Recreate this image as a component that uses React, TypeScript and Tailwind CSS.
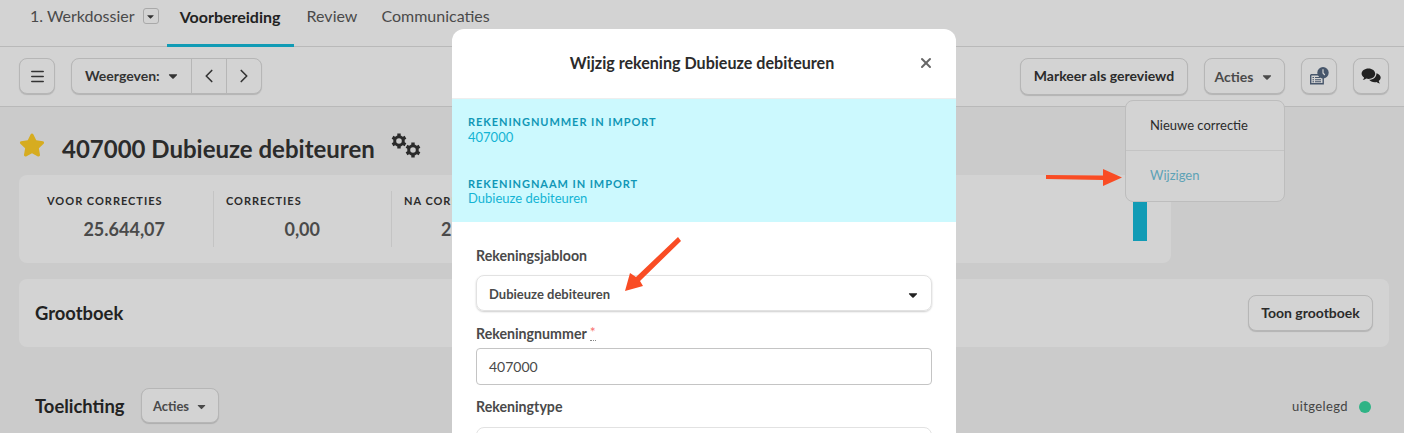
import { Menu, ChevronLeft, ChevronRight, X } from 'lucide-react';
import { FaStar, FaCaretDown } from 'react-icons/fa';

const btn = 'flex items-center justify-center rounded-lg border border-[#b6b6b6] bg-[#d3d3d3] shadow-[0_1px_1px_rgba(0,0,0,0.15)]';

function Stat({ label, value, width, pad, end }: { label: string; value: string; width: string; pad: string; end: string }) {
    return (
        <div className={`${width} ${pad} h-[56px] border-r border-[#c4c4c4]`}>
            <div className="text-[11px] font-bold tracking-[0.09em] leading-[20px] text-[#2b2b2b] whitespace-nowrap">{label}</div>
            <div className={`${end} mt-[6px] text-right text-lg font-bold leading-[24px] text-[#4a4a4a]`}>{value}</div>
        </div>
    );
}

function HistoryIcon() {
    return (
        <svg width="20" height="18" viewBox="0 0 20 18">
            <path d="M1.700 7.700h10M1.700 7.700v9h12.500V11" fill="none" stroke="#47566b" strokeWidth="1.400" />
            <path d="M3.500 10.500h1.500M6 10.500h5M3.500 12.700h1.500M6 12.700h6M3.500 14.800h1.500M6 14.800h6" stroke="#47566b" strokeWidth="1.100" />
            <circle cx="14" cy="5.700" r="5.700" fill="#47566b" />
            <path d="M14 2.300v3.700l1.800 2" fill="none" stroke="#d3d3d3" strokeWidth="1.200" />
        </svg>
    );
}

function ChatIcon() {
    return (
        <svg width="20" height="16" viewBox="0 0 20 16">
            <path d="M7.500 0.500c3.800 0 6.700 2.300 6.700 5.200s-2.900 5.200-6.700 5.200c-0.800 0-1.500-0.100-2.200-0.300-1 0.800-2.200 1.300-3.600 1.500 0.700-0.800 1.200-1.700 1.400-2.700-1.500-0.900-2.500-2.200-2.500-3.700 0-2.900 3-5.200 6.900-5.200z" fill="#222" />
            <path d="M15.500 5.200c2.400 0.700 4.200 2.400 4.200 4.300 0 1.400-0.800 2.600-2 3.400 0.200 0.900 0.600 1.700 1.300 2.500-1.400-0.200-2.500-0.600-3.500-1.400-0.500 0.100-1.100 0.200-1.700 0.200-2.500 0-4.600-1-5.600-2.500 4.200 0 7.400-2.700 7.300-6.500z" fill="#222" />
        </svg>
    );
}

function Gear() {
    return (
        <svg width="16" height="16" viewBox="0 0 16 16">
            <circle cx="8" cy="8" r="4.300" fill="none" stroke="#2b2b2b" strokeWidth="3" />
            <path d="M6.300 0.500h3.400v3h-3.400zM6.300 12.500h3.400v3h-3.400z" fill="#2b2b2b" />
            <path d="M6.300 0.500h3.400v3h-3.400zM6.300 12.500h3.400v3h-3.400z" fill="#2b2b2b" transform="rotate(60 8 8)" />
            <path d="M6.300 0.500h3.400v3h-3.400zM6.300 12.500h3.400v3h-3.400z" fill="#2b2b2b" transform="rotate(120 8 8)" />
        </svg>
    );
}

function Tabs() {
    return (
        <div className="flex h-[47px] items-stretch border-b border-[#b9b9b9] bg-[#d3d3d3] pl-[30px] text-base text-[#4a4a4a]">
            <div className="flex items-center pb-[14px]">
                <span>1. Werkdossier</span>
                <span className="ml-2 flex h-[16px] w-[16px] items-center justify-center rounded-[3px] border border-[#a9a9a9]">
                    <FaCaretDown size={11} className="text-[#333]" />
                </span>
            </div>
            <div className="-mb-px ml-2 flex w-[127px] items-center justify-center border-b-[3px] border-[#119bb5] pb-[11px] font-bold text-[#222]">Voorbereiding</div>
            <div className="ml-[13px] flex items-center pb-[14px]">Review</div>
            <div className="ml-[24px] flex items-center pb-[14px]">Communicaties</div>
        </div>
    );
}

function Toolbar() {
    return (
        <div className="flex h-[60px] items-center border-b border-[#b9b9b9] bg-[#d3d3d3] pl-[19px] pr-[15px] pb-[1px]">
            <div className={`${btn} h-[36px] w-[36px]`}>
                <Menu size={17} strokeWidth={2.300} className="text-[#333]" />
            </div>
            <div className={`${btn} ml-4 h-[36px] w-[191px] !justify-start text-[#333]`}>
                <div className="flex h-full w-[120px] items-center border-r border-[#b6b6b6] pl-[13px] text-sm font-bold">
                    Weergeven:
                    <FaCaretDown size={14} className="ml-[6px]" />
                </div>
                <div className="flex h-full w-[35px] items-center justify-center border-r border-[#b6b6b6]">
                    <ChevronLeft size={22} strokeWidth={1.800} />
                </div>
                <div className="flex h-full flex-1 items-center justify-center">
                    <ChevronRight size={22} strokeWidth={1.800} />
                </div>
            </div>
            <div className={`${btn} ml-auto h-[37px] w-[168px] text-sm font-bold text-[#2b2b2b]`}>Markeer als gereviewd</div>
            <div className={`${btn} ml-4 h-[36px] w-[81px] pt-[2px] text-sm font-bold text-[#4a4a4a]`}>
                Acties
                <FaCaretDown size={14} className="ml-[7px]" />
            </div>
            <div className={`${btn} ml-4 h-[36px] w-[36px]`}>
                <HistoryIcon />
            </div>
            <div className={`${btn} ml-4 h-[36px] w-[36px]`}>
                <ChatIcon />
            </div>
        </div>
    );
}

function Page() {
    return (
        <div className="px-[15px] pl-[19px]">
            <div className="flex h-[68px] items-center pt-[16px]">
                <FaStar size={26} className="-mt-[8px] text-[#d6ac20]" />
                <h1 className="ml-[17px] text-2xl font-bold text-[#2b2b2b]">407000 Dubieuze debiteuren</h1>
                <div className="ml-[16px] -mt-[8px] flex h-[25px] w-[30px] justify-between">
                    <Gear />
                    <div className="-ml-[2px] self-end"><Gear /></div>
                </div>
            </div>
            <div className="flex h-[88px] w-[1152px] items-center justify-between rounded-lg bg-[#d3d3d3] pr-[24px]">
                <div className="flex">
                    <Stat label="VOOR CORRECTIES" value="25.644,07" width="w-[195px]" pad="pl-[28px]" end="w-[118px]" />
                    <Stat label="CORRECTIES" value="0,00" width="w-[178px]" pad="pl-[12px]" end="w-[94px]" />
                    {/* rest of this column sits behind the modal */}
                    <div className="w-[60px] overflow-hidden pl-[12px]">
                        <div className="text-[11px] font-bold tracking-[0.09em] leading-[20px] text-[#2b2b2b] whitespace-nowrap">NA CORRECTIES</div>
                        <div className="mt-[6px] pl-[37px] text-lg font-bold leading-[24px] text-[#4a4a4a]">25.644,07</div>
                    </div>
                </div>
                <div className="mt-[5px] h-[61px] w-[14px] self-start bg-[#119bb5]" />
            </div>
            <div className="mt-4 flex h-[68px] items-center justify-between rounded-lg bg-[#d3d3d3] pl-4 pr-4">
                <h2 className="pt-[1px] text-[18.400px] font-bold text-[#222]">Grootboek</h2>
                <div className={`${btn} h-[36px] w-[125px] text-sm font-bold text-[#2b2b2b]`}>Toon grootboek</div>
            </div>
            <div className="mt-[41px] flex items-center pl-4 pr-[18px]">
                <h2 className="pt-[2px] text-[18.400px] font-bold text-[#222]">Toelichting</h2>
                <div className={`${btn} ml-[17px] h-[35px] w-[78px] pt-[2px] text-[13px] font-bold text-[#4a4a4a]`}>
                    Acties
                    <FaCaretDown size={13} className="ml-[6px]" />
                </div>
                <span className="ml-auto pt-[3px] text-[13px] tracking-[0.03em] text-[#444]">uitgelegd</span>
                <span className="ml-[11px] mt-[2px] h-[12px] w-[12px] rounded-full bg-[#2fb385]" />
            </div>
        </div>
    );
}

function Dropdown() {
    return (
        <div className="absolute left-[1125px] top-[100px] h-[102px] w-[160px] rounded-lg border border-[#bdbdbd] bg-[#d3d3d3] text-[13px]">
            <div className="flex h-[50px] items-center border-b border-[#c4c4c4] pl-[24px] text-[#2b2b2b]">Nieuwe correctie</div>
            <div className="flex h-[50px] items-center pl-[24px] text-[#5da2b6]">Wijzigen</div>
        </div>
    );
}

function Modal() {
    return (
        <div className="absolute left-[452px] top-[29px] h-[420px] w-[504px] overflow-hidden rounded-t-xl bg-white">
            <div className="relative flex h-[70px] items-center justify-center border-b border-[#eeeeee] pr-[4px]">
                <h3 className="text-[16.100px] font-bold text-[#2b2b2b]">Wijzig rekening Dubieuze debiteuren</h3>
                <X size={16} strokeWidth={3} className="absolute right-[22px] top-[26px] text-[#666]" />
            </div>
            <div className="h-[123px] bg-[#ccf9fe] pl-4 pt-[16px]">
                <div className="text-[11px] font-bold leading-[14px] tracking-[0.085em] text-[#1197b6]">REKENINGNUMMER IN IMPORT</div>
                <div className="text-[13px] leading-[16px] text-[#13b4d4]">407000</div>
                <div className="mt-[32px] text-[11px] font-bold leading-[14px] tracking-[0.085em] text-[#1197b6]">REKENINGNAAM IN IMPORT</div>
                <div className="text-[13px] leading-[15px] text-[#13b4d4]">Dubieuze debiteuren</div>
            </div>
            <div className="px-6 pt-[24px] text-[#4a4a4a]">
                <div className="text-[14.200px] font-bold leading-[20px]">Rekeningsjabloon</div>
                <div className="mt-[9px] flex h-[36px] items-center justify-between rounded-lg border border-[#e2e2e2] pl-3 pr-[11px] pt-[4px] text-[13px] font-bold shadow-[0_1px_2px_rgba(0,0,0,0.2)]">
                    Dubieuze debiteuren
                    <FaCaretDown size={14} className="text-[#222]" />
                </div>
                <div className="mt-[13px] flex text-[14.200px] font-bold leading-[20px]">
                    Rekeningnummer
                    <span className="ml-[3px] h-[17px] border-b border-dotted border-[#888] text-sm font-normal leading-[16px] text-[#f87171]">*</span>
                </div>
                <div className="mt-[4px] flex h-[37px] items-center rounded-[4px] border border-[#c4c4c4] px-3 text-sm text-[#4a4a4a]">407000</div>
                <div className="mt-[12px] text-[14.200px] font-bold leading-[20px]">Rekeningtype</div>
                <div className="mt-[10px] h-[36px] rounded-lg border border-[#e2e2e2]" />
            </div>
        </div>
    );
}

function Arrows() {
    return (
        <>
            <svg className="absolute left-[1044px] top-[168px]" width="80" height="20" viewBox="0 0 80 20">
                <path d="M2 7 L59 7.500 L59 1 L78 9.500 L59 18 L59 12 L2 11 Z" fill="#f94c24" />
            </svg>
            <svg className="absolute left-[622px] top-[234px]" width="62" height="62" viewBox="0 0 62 62">
                <path d="M56 3 L59 7 L18 47 L21 52 L3 57 L8 39 L14 43 Z" fill="#f94c24" />
            </svg>
        </>
    );
}

export default function App() {
    return (
        <div className="relative h-[433px] w-full overflow-hidden bg-[#cbcbcb] font-[Lato,sans-serif]">
            <Tabs />
            <Toolbar />
            <Page />
            <Dropdown />
            <Modal />
            <Arrows />
        </div>
    );
}
